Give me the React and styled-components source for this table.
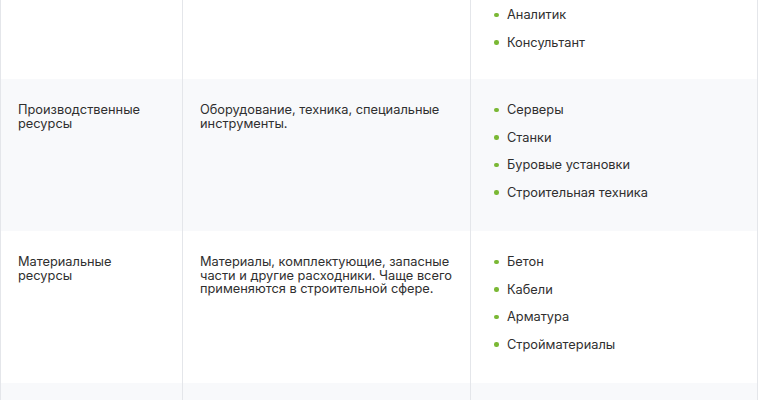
import React from "react";
import styled, { createGlobalStyle } from "styled-components";

const GlobalStyle = createGlobalStyle`
  html, body {
    margin: 0;
    padding: 0;
    background: #ffffff;
  }
  body {
    font-family: Inter, "Noto Sans", "Liberation Sans", sans-serif;
    overflow: hidden;
  }
`;

const Table = styled.div`
  width: 758px;
  margin-top: -71px;
  display: flex;
  flex-direction: column;
`;

const Row = styled.div`
  display: grid;
  grid-template-columns: 182px 288px 288px;
  background: ${(p) => (p.$shaded ? "#f8f9fb" : "#ffffff")};
  &:first-child > div {
    padding-bottom: 16px;
  }
`;

const Cell = styled.div`
  padding: 24px ${(p) => (p.$wide ? "12px" : "26px")} 18px 17px;
  border-left: 1px solid #e4e6ea;
  font-size: 12.8px;
  line-height: 13.5px;
  color: #2f2f2f;
  &:last-child {
    border-right: 1px solid #e4e6ea;
  }
`;

const List = styled.ul`
  list-style: none;
  margin: 0;
  padding: 0;
`;

const Item = styled.li`
  position: relative;
  padding-left: 19px;
  margin-bottom: 14px;
  &::before {
    content: "";
    position: absolute;
    left: 6px;
    top: 4.5px;
    width: 4.5px;
    height: 4.5px;
    border-radius: 50%;
    background: #7ab834;
  }
`;

const rows = [
  {
    name: "Трудовые ресурсы",
    desc: "Специалисты, привлекаемые для выполнения задач проекта.",
    items: ["Разработчик", "Менеджер", "Аналитик", "Консультант"],
  },
  {
    name: "Производственные ресурсы",
    desc: "Оборудование, техника, специальные инструменты.",
    items: ["Серверы", "Станки", "Буровые установки", "Строительная техника"],
  },
  {
    name: "Материальные ресурсы",
    desc: "Материалы, комплектующие, запасные части и другие расходники. Чаще всего применяются в строительной сфере.",
    items: ["Бетон", "Кабели", "Арматура", "Стройматериалы"],
  },
  {
    name: "Финансовые ресурсы",
    desc: "Денежные средства, выделенные на проект.",
    items: ["Бюджет", "Кредиты"],
  },
];

export default function App() {
  return (
    <>
      <GlobalStyle />
      <Table>
        {rows.map((r, i) => (
          <Row key={r.name} $shaded={i % 2 === 1}>
            <Cell>{r.name}</Cell>
            <Cell $wide>{r.desc}</Cell>
            <Cell $wide>
              <List>
                {r.items.map((it) => (
                  <Item key={it}>{it}</Item>
                ))}
              </List>
            </Cell>
          </Row>
        ))}
      </Table>
    </>
  );
}
